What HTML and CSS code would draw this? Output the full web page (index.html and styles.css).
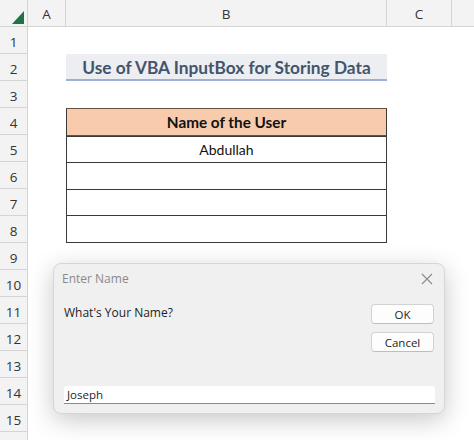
FILE: index.html
```html
<!DOCTYPE html>
<html lang="en">
<head>
    <meta charset="UTF-8">
    <title>Use of VBA InputBox for Storing Data</title>
    <link rel="stylesheet" href="styles.css">
</head>
<body>
    <div class="sheet">
        <div class="corner">
            <svg width="28" height="27" viewBox="0 0 28 27">
                <polygon points="12,24 24,24 24,11" fill="#217346"/>
            </svg>
        </div>
        <div class="colheads">
            <div class="colhead">A</div>
            <div class="colhead">B</div>
            <div class="colhead">C</div>
            <div class="colhead"></div>
        </div>
        <div class="rowheads">
            <div class="rowhead">1</div>
            <div class="rowhead">2</div>
            <div class="rowhead">3</div>
            <div class="rowhead">4</div>
            <div class="rowhead">5</div>
            <div class="rowhead">6</div>
            <div class="rowhead">7</div>
            <div class="rowhead">8</div>
            <div class="rowhead">9</div>
            <div class="rowhead">10</div>
            <div class="rowhead">11</div>
            <div class="rowhead">12</div>
            <div class="rowhead">13</div>
            <div class="rowhead">14</div>
            <div class="rowhead">15</div>
            <div class="rowhead"></div>
        </div>
        <div class="cells">
            <div class="title">Use of VBA InputBox for Storing Data</div>
            <div class="tbl">
                <div class="tbl-row tbl-head">Name of the User</div>
                <div class="tbl-row">Abdullah</div>
                <div class="tbl-row"></div>
                <div class="tbl-row"></div>
                <div class="tbl-row"></div>
            </div>
        </div>
    </div>

    <!-- InputBox window floating over the sheet -->
    <div class="dialog">
        <div class="dlg-title">
            <span>Enter Name</span>
            <svg class="dlg-close" width="12" height="12" viewBox="0 0 12 12">
                <path d="M1 1 L11 11 M11 1 L1 11" stroke="#8a8a8a" stroke-width="1.1" fill="none"/>
            </svg>
        </div>
        <div class="dlg-body">
            <div class="dlg-prompt">What's Your Name?</div>
            <div class="dlg-buttons">
                <div class="btn">OK</div>
                <div class="btn">Cancel</div>
            </div>
        </div>
        <div class="dlg-input">Joseph</div>
    </div>
</body>
</html>
```

FILE: styles.css
```css
body {
    margin: 0;
    width: 474px;
    height: 440px;
    overflow: hidden;
    background: #ffffff;
    font-family: "Open Sans", "Noto Sans", sans-serif;
    position: relative;
}
.sheet {
    display: grid;
    grid-template-columns: 28px 1fr;
    grid-template-rows: 27px 1fr;
    height: 440px;
}
.corner {
    background: #f3f3f3;
    border-right: 1px solid #d4d4d4;
    border-bottom: 1px solid #d4d4d4;
    box-sizing: border-box;
}
.corner svg {
    display: block;
}
.colheads {
    display: grid;
    grid-template-columns: 38px 321px 65px 1fr;
    background: #f3f3f3;
    border-bottom: 1px solid #d4d4d4;
    box-sizing: border-box;
}
.colhead {
    border-right: 1px solid #d4d4d4;
    display: flex;
    align-items: center;
    justify-content: center;
    font-size: 13.5px;
    color: #333333;
    padding-top: 2px;
}
.colhead:last-child {
    border-right: none;
}
.rowheads {
    display: grid;
    grid-template-rows: repeat(16, 27px);
    background: #f3f3f3;
    border-right: 1px solid #d4d4d4;
}
.rowhead {
    border-bottom: 1px solid #d4d4d4;
    display: flex;
    align-items: center;
    justify-content: center;
    font-size: 13.5px;
    color: #333333;
    padding-top: 4px;
    box-sizing: border-box;
}
.cells {
    display: grid;
    grid-template-columns: 38px 321px 65px 1fr;
    grid-template-rows: repeat(16, 27px);
    font-family: "Lato", "Liberation Sans", sans-serif;
}
.title {
    grid-column: 2;
    grid-row: 2;
    background: #eceef2;
    border-bottom: 2px solid #9db1d8;
    display: flex;
    align-items: center;
    justify-content: center;
    font-size: 17.3px;
    font-weight: bold;
    color: #44546a;
    padding-top: 2px;
}
.tbl {
    grid-column: 2;
    grid-row: 4 / span 5;
    display: grid;
    grid-template-rows: repeat(5, 1fr);
    border: 1px solid #3a3a3a;
    border-top-color: #6b5040;
}
.tbl-row {
    border-top: 1px solid #3a3a3a;
    display: flex;
    align-items: flex-end;
    justify-content: center;
    padding-bottom: 4px;
    font-size: 14px;
    color: #111111;
}
.tbl-head {
    border-top: none;
    border-bottom: 1px solid #6b5040;
    background: #f8cbad;
    font-size: 15.3px;
    font-weight: bold;
}
.dialog {
    position: absolute;
    left: 53px;
    top: 263px;
    width: 392px;
    height: 151px;
    box-sizing: border-box;
    background: #f0f0f0;
    border: 1px solid #d6d6d6;
    border-radius: 8px;
    box-shadow: 0 6px 24px rgba(0, 0, 0, 0.22);
    display: flex;
    flex-direction: column;
    font-family: "Open Sans", "Noto Sans", sans-serif;
}
.dlg-title {
    height: 29px;
    display: flex;
    align-items: center;
    justify-content: space-between;
    padding: 0 11px 0 8px;
    font-size: 12px;
    color: #8a8a8a;
}
.dlg-body {
    display: flex;
    justify-content: space-between;
    padding: 11px 10px 0 10px;
}
.dlg-prompt {
    font-size: 12px;
    color: #1e1e1e;
    line-height: 18px;
}
.dlg-buttons {
    display: flex;
    flex-direction: column;
    gap: 8px;
}
.btn {
    width: 63px;
    height: 20px;
    box-sizing: border-box;
    background: #fdfdfd;
    border: 1px solid #d3d3d3;
    border-bottom-color: #bdbdbd;
    border-radius: 4px;
    display: flex;
    align-items: center;
    justify-content: center;
    font-size: 11.5px;
    color: #1e1e1e;
}
.dlg-input {
    margin: auto 9px 9px 10px;
    height: 18px;
    box-sizing: border-box;
    background: #ffffff;
    border-bottom: 1px solid #8a8a8a;
    border-radius: 3px 3px 0 0;
    padding-left: 3px;
    font-size: 11.5px;
    line-height: 17px;
    color: #1e1e1e;
}
```
